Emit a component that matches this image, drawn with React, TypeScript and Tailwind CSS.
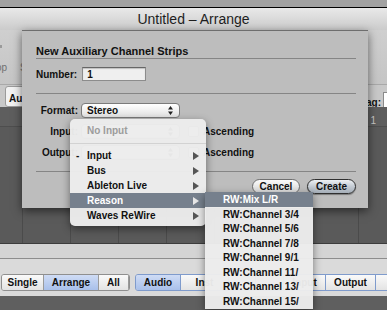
import React from "react";

function Arrow({ className = "" }: { className?: string }) {
  return (
    <svg width="6" height="8" viewBox="0 0 6 8" className={className}>
      <path d="M0 0L6 4L0 8Z" fill="currentColor" />
    </svg>
  );
}

function UpDown() {
  return (
    <svg width="5" height="9" viewBox="0 0 5 9" className="text-[#222]">
      <path d="M0 3.5L2.5 0L5 3.5Z M0 5.5L2.5 9L5 5.5Z" fill="currentColor" />
    </svg>
  );
}

function PopUp({ label }: { label: string }) {
  return (
    <div className="flex h-[15px] w-[99px] items-center justify-between rounded-[4px] border border-[#7b7b7b] bg-gradient-to-b from-[#ffffff] to-[#e2e2e2] pl-[5px] pr-[6px] text-[10px] font-bold text-[#111]">
      <span>{label}</span>
      <UpDown />
    </div>
  );
}

function Row({ label, children }: { label: string; children: React.ReactNode }) {
  return (
    <div className="flex items-center gap-[3px]">
      <div className="w-[42px] text-right text-[10px] font-bold text-[#111]">{label}</div>
      {children}
    </div>
  );
}

function SegButton({ label, on, blue }: { label: string; on?: boolean; blue?: boolean }) {
  return (
    <div
      className={
        "flex h-full items-center justify-center border-r text-[10px] font-bold text-[#111] " +
        (blue ? "border-[#7f9bcc] " : "border-[#9a9a9a] ") +
        (on ? "bg-gradient-to-b from-[#cfdcf5] to-[#a9c0ea]" : "bg-gradient-to-b from-[#fafafa] to-[#e3e3e3]")
      }
    >
      {label}
    </div>
  );
}

const mixItems = [
  "RW:Channel 3/4",
  "RW:Channel 5/6",
  "RW:Channel 7/8",
  "RW:Channel 9/1",
  "RW:Channel 11/",
  "RW:Channel 13/",
  "RW:Channel 15/",
];

export default function App() {
  return (
    <div className="relative h-[310px] w-[387px] overflow-hidden bg-[#5d5d5d] font-['Liberation_Sans',Arial,sans-serif] select-none">
      {/* window behind */}
      <div className="h-[7px] bg-[#a1a1a1]" />
      <div className="h-px bg-black" />
      <div className="flex h-[22px] items-center justify-center bg-gradient-to-b from-[#e9e9e9] to-[#cbcbcb] text-[14px] text-[#1e1e1e]">
        Untitled – Arrange
      </div>

      <div className="flex h-[54px] gap-[12px] bg-gradient-to-b from-[#cfcfcf] to-[#c5c5c5] pt-[10px]">
        <div className="-ml-[16px] flex w-[24px] flex-col items-center gap-[5px]">
          <svg width="16" height="15" viewBox="0 0 16 15" className="text-[#9a9a9a]">
            <path d="M2 2h3v3H2zM8 2h3v3H8zM5 5h3v3H5zM11 5h3v3h-3zM2 8h3v3H2zM8 8h3v3H8zM5 11h3v3H5z" fill="currentColor" />
          </svg>
          <span className="text-[10px] text-[#707070]">Loop</span>
        </div>
        <div className="flex flex-col items-start pt-[20px]">
          <span className="text-[10px] text-[#707070]">Snap</span>
        </div>
      </div>

      <div className="flex h-[23px] items-start justify-between border-t border-[#a9a9a9] bg-[#c8c8c8]">
        <div className="ml-[5px] mt-[1px] flex h-[21px] w-[60px] items-center rounded-[3px] border border-[#9b9b9b] bg-[#f2f2f2] pl-[3px] pt-[3px] text-[10px] font-bold text-[#111]">
          Audio
        </div>
        <div className="mt-[5px] flex items-center gap-[2px]">
          <span className="pt-[5px] text-[10px] font-bold text-[#111]">Flag:</span>
          <div className="h-[16px] w-[4px] border-y border-l border-[#8a8a8a] bg-white" />
        </div>
      </div>

      {/* arrange area */}
      <div className="flex h-[136px] flex-col bg-[#5a5a5a]">
        <div className="flex h-[20px] justify-end border-b border-[#4e4e4e] bg-[#5e5e5e] pr-[11px] pt-[6px] text-[10px] text-[#c9c9c9]">
          1
        </div>
        <div className="flex flex-1 pl-[22px]">
          {[0, 1, 2, 3, 4, 5, 6, 7].map((i) => (
            <div key={i} className="w-[48px] shrink-0 border-l border-[#4b4b4b]" />
          ))}
        </div>
      </div>

      {/* bottom bar */}
      <div className="flex h-[53px] flex-col">
        <div className="h-[15px] border-t border-[#3c3c3c] bg-[#d4d4d4]" />
        <div className="flex flex-1 items-start gap-[5px] border-t border-[#8d8d8d] bg-[#dadada] pl-[1px] pt-[15px]">
          <div className="grid h-[17px] shrink-0 grid-cols-[42px_55px_30px] overflow-hidden rounded-[3px] border border-[#8f8f8f]">
            <SegButton label="Single" />
            <SegButton label="Arrange" on />
            <SegButton label="All" />
          </div>
          <div className="grid h-[17px] shrink-0 grid-cols-[45px_48px_27px_28px_42px_50px_60px] overflow-hidden rounded-[3px] border border-[#7f9bcc]">
            <SegButton label="Audio" on blue />
            <SegButton label="Inst" blue />
            <SegButton label="" blue />
            <SegButton label="" blue />
            <SegButton label="Input" blue />
            <SegButton label="Output" blue />
            <SegButton label="Master" blue />
          </div>
        </div>
      </div>
      <div className="h-[14px] bg-[#5f5f5f]" />

      {/* sheet */}
      <div className="absolute left-[22px] top-[30px] flex h-[178px] w-[346px] flex-col border-t border-[#6e6e6e] bg-[#bdbdbd] pl-[14px] pr-[12px] pt-[13px] shadow-[0_3px_9px_rgba(0,0,0,0.55)]">
        <div className="flex h-[14px] items-center text-[11px] font-bold text-[#111]">New Auxiliary Channel Strips</div>
        <div className="h-px bg-[#858585]" />
        <div className="mt-[8px] flex h-[14px] items-center gap-[5px]">
          <span className="text-[10px] font-bold text-[#111]">Number:</span>
          <div className="flex h-[14px] w-[64px] items-center border border-[#8c8c8c] border-t-[#666] bg-[#efefef] pl-[4px] text-[10px] font-bold text-[#111] shadow-[inset_0_1px_1px_rgba(0,0,0,0.2)]">
            1
          </div>
        </div>
        <div className="mt-[12px] h-px bg-[#858585]" />
        <div className="mt-[9px]">
          <Row label="Format:">
            <PopUp label="Stereo" />
          </Row>
        </div>
        <div className="mt-[6px]">
          <Row label="Input:">
            <PopUp label="" />
            <div className="ml-[5px] h-[11px] w-[11px] rounded-[2px] border border-[#7b7b7b] bg-white" />
            <span className="ml-[1px] text-[10px] font-bold text-[#111]">Ascending</span>
          </Row>
        </div>
        <div className="mt-[6px]">
          <Row label="Output:">
            <PopUp label="" />
            <div className="ml-[5px] h-[11px] w-[11px] rounded-[2px] border border-[#7b7b7b] bg-white" />
            <span className="ml-[1px] text-[10px] font-bold text-[#111]">Ascending</span>
          </Row>
        </div>
        <div className="mt-[11px] h-px bg-[#858585]" />
        <div className="mt-[7px] flex justify-end gap-[7px]">
          <div className="flex h-[15px] w-[48px] items-center justify-center rounded-full border border-[#6f6f6f] bg-gradient-to-b from-[#fbfbfb] to-[#d6d6d6] text-[10px] font-bold text-[#111]">
            Cancel
          </div>
          <div className="flex h-[15px] w-[49px] items-center justify-center rounded-full border border-[#2f2f2f] bg-gradient-to-b from-[#eef1f4] via-[#c4cbd3] to-[#a5aeb8] text-[10px] font-bold text-[#111] shadow-[0_1px_1px_rgba(0,0,0,0.35)]">
            Create
          </div>
        </div>
      </div>

      {/* popup menu */}
      <div className="absolute left-[70px] top-[119px] flex w-[136px] flex-col rounded-[5px] bg-[#ececec]/[0.97] pb-[3px] pt-[4px] text-[10px] font-bold text-[#111] shadow-[0_3px_8px_rgba(0,0,0,0.45)]">
        <div className="flex h-[15px] items-center pl-[17px] text-[#9c9c9c]">No Input</div>
        <div className="flex h-[10px] items-center">
          <div className="h-px w-full bg-[#d2d2d2]" />
        </div>
        {[
          { t: "Input", dash: true },
          { t: "Bus" },
          { t: "Ableton Live" },
          { t: "Reason", on: true },
          { t: "Waves ReWire" },
        ].map((it) => (
          <div
            key={it.t}
            className={
              "flex h-[15px] items-center justify-between pr-[7px] " +
              (it.on ? "bg-[#76808d] text-white" : "")
            }
          >
            <div className="flex items-center">
              <span className="w-[17px] pl-[6px]">{it.dash ? "-" : ""}</span>
              <span>{it.t}</span>
            </div>
            <Arrow className={it.on ? "text-[#e6e6e6]" : "text-[#555]"} />
          </div>
        ))}
      </div>

      {/* submenu */}
      <div className="absolute left-[205px] top-[192px] flex w-[108px] flex-col bg-[#ececec]/[0.97] text-[10px] font-bold text-[#111] shadow-[0_3px_8px_rgba(0,0,0,0.45)]">
        <div className="flex h-[15px] items-center bg-[#76808d] pl-[18px] text-white">RW:Mix L/R</div>
        {mixItems.map((t) => (
          <div key={t} className="flex h-[14.5px] items-center pl-[18px]">
            {t}
          </div>
        ))}
      </div>
    </div>
  );
}
